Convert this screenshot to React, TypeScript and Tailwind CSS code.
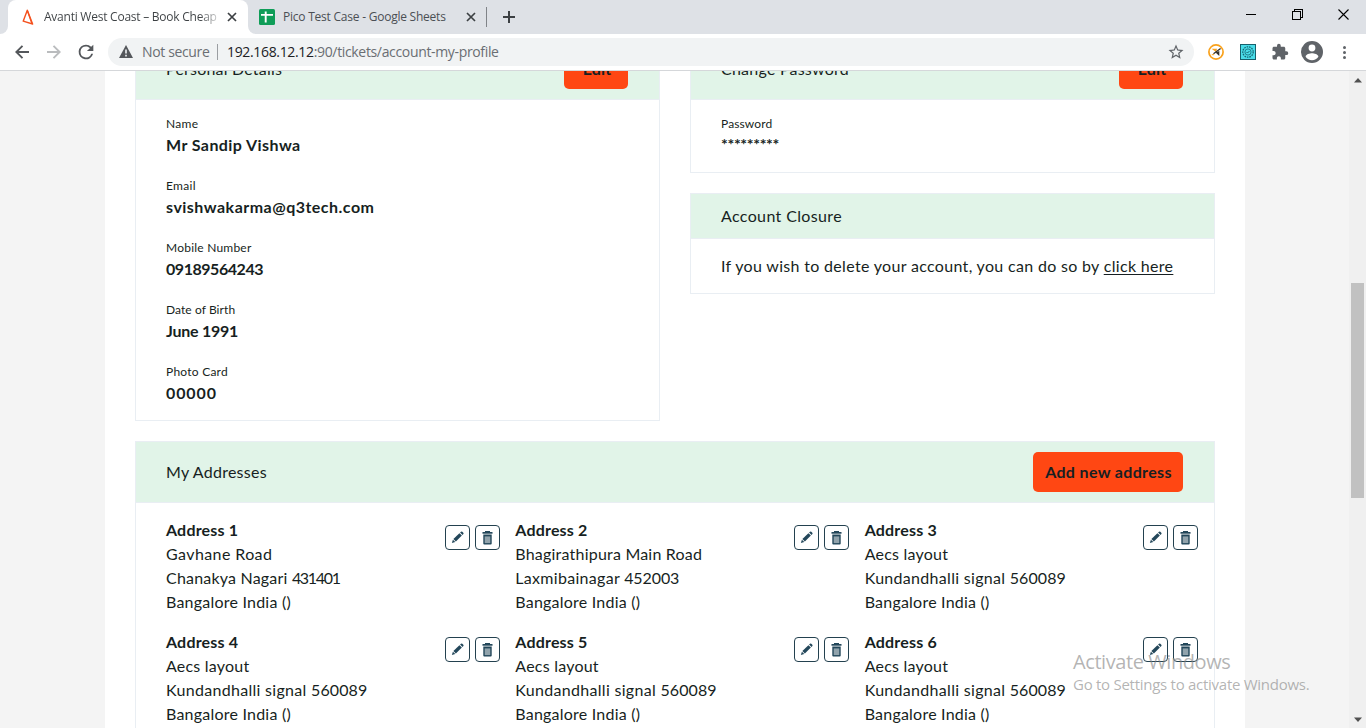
import type { ReactNode } from "react";

type Line = { text: string; digits?: string; track: string; digitTrack?: string };

const kundan: Line[] = [
  { text: "Aecs layout", track: "tracking-[0.22px]" },
  { text: "Kundandhalli signal ", digits: "560089", track: "tracking-[0.3px]", digitTrack: "tracking-[0.1px]" },
  { text: "Bangalore India ()", track: "tracking-[0.22px]" },
];

const addresses: { title: string; lines: Line[] }[] = [
  {
    title: "Address 1",
    lines: [
      { text: "Gavhane Road", track: "tracking-[0.4px]" },
      { text: "Chanakya Nagari ", digits: "431401", track: "tracking-[0.2px]", digitTrack: "tracking-[-1.3px]" },
      { text: "Bangalore India ()", track: "tracking-[0.22px]" },
    ],
  },
  {
    title: "Address 2",
    lines: [
      { text: "Bhagirathipura Main Road", track: "tracking-[0.21px]" },
      { text: "Laxmibainagar ", digits: "452003", track: "tracking-[0.3px]", digitTrack: "tracking-[-0.1px]" },
      { text: "Bangalore India ()", track: "tracking-[0.22px]" },
    ],
  },
  { title: "Address 3", lines: kundan },
  { title: "Address 4", lines: kundan },
  { title: "Address 5", lines: kundan },
  { title: "Address 6", lines: kundan },
];

const details = [
  { label: "Name", value: "Mr Sandip Vishwa", lt: "tracking-[0.3px]", vt: "tracking-[0.42px]" },
  { label: "Email", value: "svishwakarma@q3tech.com", lt: "tracking-[0.3px]", vt: "tracking-[0.48px]" },
  { label: "Mobile Number", value: "09189564243", lt: "tracking-[0.22px]", vt: "tracking-[-0.46px]" },
  { label: "Date of Birth", value: "June 1991", lt: "tracking-[0.08px]", vt: "tracking-[-0.24px]" },
  { label: "Photo Card", value: "00000", lt: "tracking-[0.24px]", vt: "tracking-[0.9px]" },
];

function CloseGlyph({ className }: { className: string }) {
  return (
    <svg viewBox="0 0 10 10" className={className} fill="none" stroke="#3c4043" strokeWidth="1.7">
      <path d="M1 1l8 8M9 1L1 9" />
    </svg>
  );
}

function TabStrip() {
  return (
    <div className="flex h-[34px] bg-[#dee1e6]">
      <div className="flex w-2 items-end bg-white">
        <div className="h-full w-full rounded-br-lg bg-[#dee1e6]" />
      </div>
      <div className="w-[240px] bg-[#dee1e6]">
        <div className="flex h-full items-center rounded-t-lg bg-white pl-[14px] text-[#3c4043]">
          <svg width="12" height="16" viewBox="0 0 12 16" fill="none" stroke="#f4511e" strokeWidth="1.4" strokeLinejoin="round">
            <path d="M5.3 1.2L1.2 12.2L10.6 15L5.3 1.2Z" />
            <path d="M5.500 2l4.200 12" strokeWidth="1.200" />
          </svg>
          <span className="ml-[10px] w-[173px] overflow-hidden bg-gradient-to-r from-[#3c4043] from-90% to-[#3c404340] bg-clip-text text-xs tracking-[-0.24px] whitespace-nowrap text-transparent">
            Avanti West Coast – Book Cheap
          </span>
          <CloseGlyph className="ml-[10px] h-[10px] w-[10px]" />
        </div>
      </div>
      <div className="flex w-2 bg-white">
        <div className="h-full w-full rounded-bl-lg bg-[#dee1e6]" />
      </div>
      <div className="flex items-center pl-[3px] text-[#4b4f54]">
        <svg width="16" height="16" viewBox="0 0 16 16">
          <rect width="16" height="16" rx="1.500" fill="#0f9d58" />
          <path d="M2 5.900h12M6.700 2.500v11" stroke="#fff" strokeWidth="1.900" />
        </svg>
        <span className="ml-2 w-[164px] text-xs tracking-[-0.23px] whitespace-nowrap">Pico Test Case - Google Sheets</span>
        <CloseGlyph className="ml-[19px] h-[10px] w-[10px]" />
        <div className="ml-[10px] h-5 w-px bg-[#808388]" />
        <svg className="ml-4" width="12" height="12" viewBox="0 0 12 12" stroke="#3c4043" strokeWidth="2">
          <path d="M6 0v12M0 6h12" />
        </svg>
      </div>
      <div className="mr-[17px] ml-auto flex h-[28px] items-center">
        <div className="mr-[36px] h-px w-[10px] bg-black" />
        <svg className="mr-[35px]" width="11" height="11" viewBox="0 0 11 11" fill="none" stroke="#000" shapeRendering="crispEdges">
          <path d="M.5 2.500h8v8h-8zM2.500 2.500v-2h8v8h-2" />
        </svg>
        <svg width="11" height="11" viewBox="0 0 11 11" stroke="#000" strokeWidth="1.100">
          <path d="M.5.5l10 10M10.500.5l-10 10" />
        </svg>
      </div>
    </div>
  );
}

function Toolbar() {
  return (
    <div className="flex h-[37px] items-center border-b border-[#d5d7da] bg-white">
      <svg className="ml-[15px]" width="14" height="14" viewBox="0 0 14 14" fill="none" stroke="#54575b" strokeWidth="1.900">
        <path d="M14 7H1.500M7.500.8L1.300 7l6.200 6.200" />
      </svg>
      <svg className="ml-[18px]" width="14" height="14" viewBox="0 0 14 14" fill="none" stroke="#babcbe" strokeWidth="1.900">
        <path d="M0 7h12.500M6.500.8L12.700 7l-6.200 6.200" />
      </svg>
      <svg className="ml-[14px]" width="22" height="22" viewBox="0 0 24 24" fill="#54575b">
        <path d="M17.650 6.350A7.960 7.960 0 0 0 12 4a8 8 0 1 0 7.730 10h-2.080A6 6 0 1 1 12 6c1.660 0 3.140.69 4.220 1.780L13 11h7V4l-2.350 2.350z" />
      </svg>
      <div className="ml-[11px] flex h-7 w-[1086px] items-center rounded-full bg-[#f1f3f4] text-sm whitespace-nowrap">
        <svg className="mb-px ml-[11px]" width="14" height="13" viewBox="0 0 14 13">
          <path d="M7 0l7 13H0z" fill="#54575b" />
          <path d="M7 4.500v4M7 9.700v1.700" stroke="#f1f3f4" strokeWidth="1.600" />
        </svg>
        <span className="ml-[9px] w-[67px] tracking-[-0.36px] text-[#6a6e73]">Not secure</span>
        <div className="ml-2 h-4 w-px bg-[#9b9ea2]" />
        <span className="ml-[9px] tracking-[-0.34px] text-[#6a6e73]">
          <span className="text-[#202124]">192.168.12.12</span>:90/tickets/account-my-profile
        </span>
        <svg className="mr-[9px] ml-auto" width="18" height="18" viewBox="0 0 24 24" fill="#5f6368">
          <path d="M22 9.240l-7.190-.62L12 2 9.190 8.630 2 9.240l5.460 4.730L5.820 21 12 17.270 18.180 21l-1.630-7.030L22 9.240zM12 15.400l-3.760 2.270 1-4.280-3.320-2.880 4.380-.38L12 6.100l1.710 4.040 4.380.38-3.320 2.880 1 4.280L12 15.400z" />
        </svg>
      </div>
      <svg className="ml-[14px]" width="16" height="16" viewBox="0 0 16 16" fill="none">
        <circle cx="8" cy="8" r="7.100" stroke="#f9a11b" strokeWidth="1.700" />
        <path d="M3.500 4.800h5.500L8 8z" fill="#f9a11b" />
        <path d="M12.600 4.600L5.500 9.800" stroke="#33312c" strokeWidth="1.300" />
        <path d="M7.500 8.500L11.300 7v5z" fill="#33312c" />
        <path d="M3.800 10.700h2.400" stroke="#f9a11b" />
      </svg>
      <svg className="ml-4" width="16" height="16" viewBox="0 0 16 16" fill="none">
        <rect x=".5" y=".5" width="15" height="15" fill="#49dce8" stroke="#17606c" />
        <circle cx="8" cy="8" r="5.200" stroke="#176773" strokeWidth="1.300" strokeDasharray="1.600 .9" />
        <circle cx="8" cy="8" r="3.100" stroke="#176773" strokeWidth=".8" />
        <path d="M6.500 8l1 1 2-2" stroke="#176773" />
      </svg>
      <svg className="ml-[15px]" width="18" height="18" viewBox="0 0 24 24" fill="#5f6368">
        <path d="M20.500 11H19V7c0-1.100-.9-2-2-2h-4V3.500a2.500 2.500 0 0 0-5 0V5H4c-1.100 0-1.990.9-1.990 2v3.800H3.500c1.490 0 2.700 1.210 2.700 2.700s-1.210 2.700-2.700 2.700H2V20c0 1.100.9 2 2 2h3.800v-1.500c0-1.490 1.210-2.700 2.700-2.700s2.700 1.210 2.700 2.700V22H17c1.100 0 2-.9 2-2v-4h1.500a2.500 2.500 0 0 0 0-5z" />
      </svg>
      <svg className="ml-[12px]" width="22" height="22" viewBox="1.300 1.300 21.400 21.400" fill="#5f6368">
        <path d="M12 1.300a10.700 10.700 0 1 0 0 21.400 10.700 10.700 0 0 0 0-21.400zm0 3.500a3.300 3.300 0 1 1 0 6.600 3.300 3.300 0 0 1 0-6.600zm0 15.200a7.600 7.600 0 0 1-6.200-3.400c0-2.200 4.100-3.300 6.200-3.300s6.200 1.100 6.200 3.300A7.600 7.600 0 0 1 12 20z" />
      </svg>
      <div className="ml-5 flex flex-col gap-[2px]">
        <div className="h-[3px] w-[3px] rounded-full bg-[#5f6368]" />
        <div className="h-[3px] w-[3px] rounded-full bg-[#5f6368]" />
        <div className="h-[3px] w-[3px] rounded-full bg-[#5f6368]" />
      </div>
    </div>
  );
}

function Card({ title, titleTrack, action, className, head, children }: {
  title: string;
  titleTrack: string;
  action?: ReactNode;
  className: string;
  head: string;
  children: ReactNode;
}) {
  return (
    <section className={`border border-[#e9eef3] bg-white ${className}`}>
      <header className={`flex items-center justify-between border-b border-[#e9eef3] bg-[#e1f4e8] pr-[31px] pl-[30px] ${head}`}>
        <h2 className={titleTrack}>{title}</h2>
        {action}
      </header>
      {children}
    </section>
  );
}

function ActionButton({ label, className }: { label: string; className: string }) {
  return <button className={`h-10 rounded-[5px] bg-[#ff4713] font-bold ${className}`}>{label}</button>;
}

function IconButtons() {
  return (
    <div className="mt-[7px] flex gap-[5px]">
      <button className="flex h-[25px] w-[25px] items-center justify-center rounded-[4px] border border-[#23414f]">
        <svg width="13" height="13" viewBox="0 0 13 13" fill="#23475a">
          <path d="M8.400 2.200L10.900 4.600L4.900 10.500L2.400 8.100z" />
          <path d="M9.100 1.600l.9-.9q.7-.5 1.300.1l1 1q.6.700.1 1.300l-.9.900z" />
          <path d="M1.900 8.700l2.400 2.300-3.400 1.100z" />
        </svg>
      </button>
      <button className="flex h-[25px] w-[25px] items-center justify-center rounded-[4px] border border-[#23414f]">
        <svg className="mt-px" width="11" height="14" viewBox="0 0 11 14">
          <path d="M3 0h5v1h2.500v1.800H.5V1H3z" fill="#23475a" />
          <path d="M1.300 2.800h8.400v1.200H1.300z" fill="#91a3ac" />
          <path d="M1.300 4h8.400v8.500q0 1-1 1H2.300q-1 0-1-1z" fill="#23475a" />
          <path d="M2.700 5.400h5.600v6.700H2.700z" fill="#91a3ac" />
        </svg>
      </button>
    </div>
  );
}

function Page() {
  return (
    <main className="h-[690px] w-[1140px] shrink-0 overflow-hidden bg-white px-[30px] font-[Lato,sans-serif] text-base leading-6 whitespace-nowrap text-[#171f22]">
      <div className="-mt-[33px] flex justify-between">
        <Card title="Personal Details" titleTrack="tracking-[0.2px]" head="h-[61px]" className="h-[383px] w-[525px]" action={<ActionButton label="Edit" className="w-16 pl-[2px] tracking-[0.1px]" />}>
          <dl className="flex flex-col gap-[18px] pt-[13px] pl-[30px]">
            {details.map((d) => (
              <div key={d.label}>
                <dt className={`text-xs leading-[22px] ${d.lt}`}>{d.label}</dt>
                <dd className={`pb-[2px] leading-5 font-bold ${d.vt}`}>{d.value}</dd>
              </div>
            ))}
          </dl>
        </Card>
        <div className="flex w-[525px] flex-col gap-5">
          <Card title="Change Password" titleTrack="tracking-[0.24px]" head="h-[61px]" className="h-[135px]" action={<ActionButton label="Edit" className="w-16 pl-[2px] tracking-[0.1px]" />}>
            <div className="pt-[13px] pl-[30px]">
              <div className="text-xs leading-[22px] tracking-[0.12px]">Password</div>
              <div className="leading-[18px] font-bold tracking-[-0.36px]">*********</div>
            </div>
          </Card>
          <Card title="Account Closure" titleTrack="tracking-[0.36px]" head="h-[45px]" className="h-[101px]">
            <p className="pt-[15px] pl-[30px] tracking-[0.32px]">
              If you wish to delete your account, you can do so by{" "}
              <a className="underline underline-offset-2">click here</a>
            </p>
          </Card>
        </div>
      </div>
      <Card title="My Addresses" titleTrack="tracking-[0.25px]" head="h-[61px]" className="mt-5 h-[420px]" action={<ActionButton label="Add new address" className="w-[150px] pl-px tracking-[0.35px]" />}>
        <div className="grid grid-cols-3 gap-y-4 pt-[15px] pl-[30px]">
          {addresses.map((a) => (
            <article key={a.title} className="flex justify-between pr-[15.6px]">
              <div>
                <h3 className="font-bold tracking-[0.18px]">{a.title}</h3>
                {a.lines.map((l) => (
                  <div key={l.text} className={l.track}>
                    {l.text}
                    {l.digits && <span className={l.digitTrack}>{l.digits}</span>}
                  </div>
                ))}
              </div>
              <IconButtons />
            </article>
          ))}
        </div>
      </Card>
    </main>
  );
}

export default function App() {
  return (
    <div className="relative flex h-[728px] w-[1366px] flex-col overflow-hidden font-['Open_Sans',sans-serif]">
      <TabStrip />
      <Toolbar />
      <div className="flex min-h-0 flex-1 overflow-hidden">
        <div className="flex w-[1349px] items-start bg-[#f4f4f4] pl-[105px]">
          <Page />
        </div>
        <div className="flex w-[17px] flex-col items-center bg-[#f0f0f0]">
          <svg className="mt-[7px]" width="8" height="5" viewBox="0 0 8 5" fill="#505050"><path d="M4 0l4 4.500H0z" /></svg>
          <div className="mt-[200px] mr-px h-[215px] w-[13px] bg-[#c1c1c1]" />
          <svg className="mt-auto mb-[6px]" width="8" height="5" viewBox="0 0 8 5" fill="#505050"><path d="M0 .5h8L4 5z" /></svg>
        </div>
      </div>
      <div className="absolute top-[649px] left-[1073px] whitespace-nowrap text-[#828282]/60">
        <div className="pt-px text-[20px] leading-6 tracking-[-0.42px]">Activate Windows</div>
        <div className="text-[15px] leading-5 tracking-[-0.27px]">Go to Settings to activate Windows.</div>
      </div>
    </div>
  );
}
